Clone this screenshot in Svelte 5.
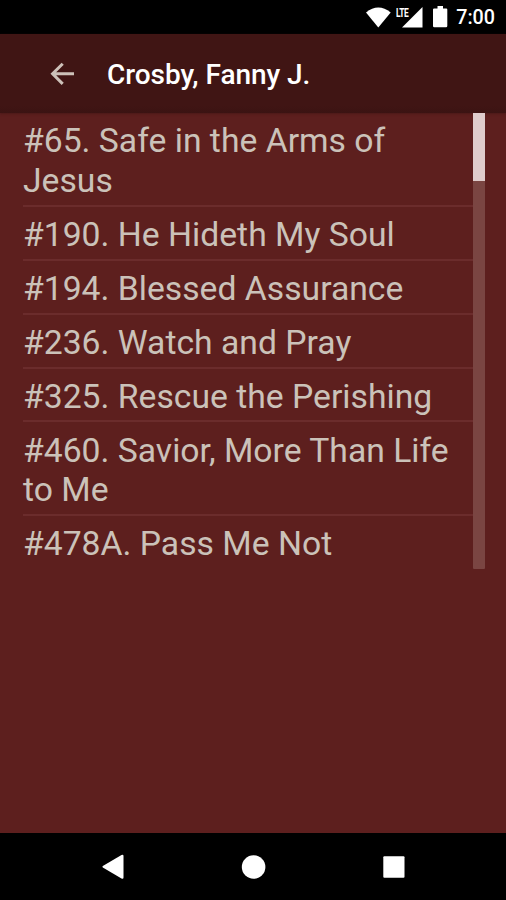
<script>
  const hymns = [
    '#65. Safe in the Arms of Jesus',
    '#190. He Hideth My Soul',
    '#194. Blessed Assurance',
    '#236. Watch and Pray',
    '#325. Rescue the Perishing',
    '#460. Savior, More Than Life to Me',
    '#478A. Pass Me Not'
  ];
</script>

<div class="screen">
  <div class="status">
    <svg class="wifi" width="25" height="21" viewBox="0 0 25 21"><path d="M0 5.5Q12.3-4.3 24.7 5.5L12.3 20.5Z" /></svg>
    <div class="signal">
      <span>LTE</span>
      <svg width="21" height="21" viewBox="0 0 21 21"><path d="M0 20.5L20.5 0V20.5Z" /></svg>
    </div>
    <svg class="battery" width="15" height="22" viewBox="0 0 15 22"><path d="M4.5 0H10V2.5H13.2Q14.3 2.5 14.3 3.6V20Q14.3 21.3 13 21.3H1.3Q0 21.3 0 20V3.6Q0 2.5 1.1 2.5H4.5Z" /></svg>
    <time>7:00</time>
  </div>
  <header>
    <svg width="24" height="24" viewBox="0 0 24 24"><path d="M12.7 1.7L2.6 11.8L12.7 21.9M2.6 11.8H24" /></svg>
    <h1>Crosby, Fanny J.</h1>
  </header>
  <main>
    <ul>
      {#each hymns as hymn}
        <li>{hymn}</li>
      {/each}
    </ul>
    <div class="track"><div class="thumb"></div></div>
  </main>
  <nav>
    <svg width="22" height="26" viewBox="0 0 22 26"><path d="M.8 12Q0 12.8.8 13.5L19.5 24.6Q21.5 25.4 21.5 23.5V2Q21.5.2 19.5 1Z" /></svg>
    <svg width="24" height="24" viewBox="0 0 24 24"><circle cx="11.6" cy="12" r="11.8" /></svg>
    <svg width="22" height="22" viewBox="0 0 22 22"><rect x=".3" y=".3" width="21.2" height="21.4" rx="1" /></svg>
  </nav>
</div>

<style>
  .screen {
    width: 506px;
    height: 900px;
    overflow: hidden;
    display: flex;
    flex-direction: column;
    background: #5d1f1e;
    font-family: Roboto, 'Liberation Sans', sans-serif;
  }
  svg { display: block; fill: #fff; flex: none; overflow: visible; }
  .status {
    height: 34px;
    flex: none;
    box-sizing: border-box;
    padding: 0 11px 0 366px;
    display: flex;
    align-items: flex-start;
    background: #000;
    color: #fff;
  }
  .wifi { margin-top: 7px; }
  .signal {
    position: relative;
    box-sizing: border-box;
    width: 31px;
    height: 28px;
    margin-left: 1px;
    padding: 7px 0 0 10px;
  }
  .signal span {
    position: absolute;
    left: 3.5px;
    top: 7px;
    font-size: 12px;
    line-height: 12px;
    font-weight: 700;
    letter-spacing: -.6px;
    transform: scaleX(.7);
    transform-origin: left;
  }
  .battery { margin: 6px 0 0 10px; }
  time { margin-left: auto; line-height: 36px; font-size: 19.7px; font-weight: 500; white-space: nowrap; }
  header {
    height: 79px;
    flex: none;
    box-sizing: border-box;
    padding-left: 50px;
    display: flex;
    align-items: center;
    background: linear-gradient(#401514 0 72px, #3b1312);
    box-shadow: 0 1px 2px #4b1918;
  }
  header svg { fill: none; stroke: #cdc1b9; stroke-width: 3; }
  h1 {
    margin: 3px 0 0 33px;
    font-size: 28px;
    line-height: 34px;
    font-weight: 500;
    letter-spacing: -.05px;
    color: #fff;
    white-space: nowrap;
  }
  main { flex: 1; display: flex; align-items: flex-start; padding-left: 23px; }
  ul { width: 450px; margin: 0; padding: 0; list-style: none; }
  li {
    padding: 8.2px 0 3.9px;
    border-bottom: 2px solid #6b2c2c;
    font-size: 33.7px;
    line-height: 39.85px;
    color: #cbc2b9;
  }
  li:last-child { border-bottom: 0; }
  .track { width: 11.5px; height: 456px; background: #7a4542; border-radius: 0 0 1px 1px; }
  .thumb { height: 68px; background: #dfcccc; }
  nav {
    height: 67px;
    flex: none;
    box-sizing: border-box;
    padding: 0 101px 0 102px;
    display: flex;
    align-items: center;
    justify-content: space-between;
    background: #000;
  }
</style>
